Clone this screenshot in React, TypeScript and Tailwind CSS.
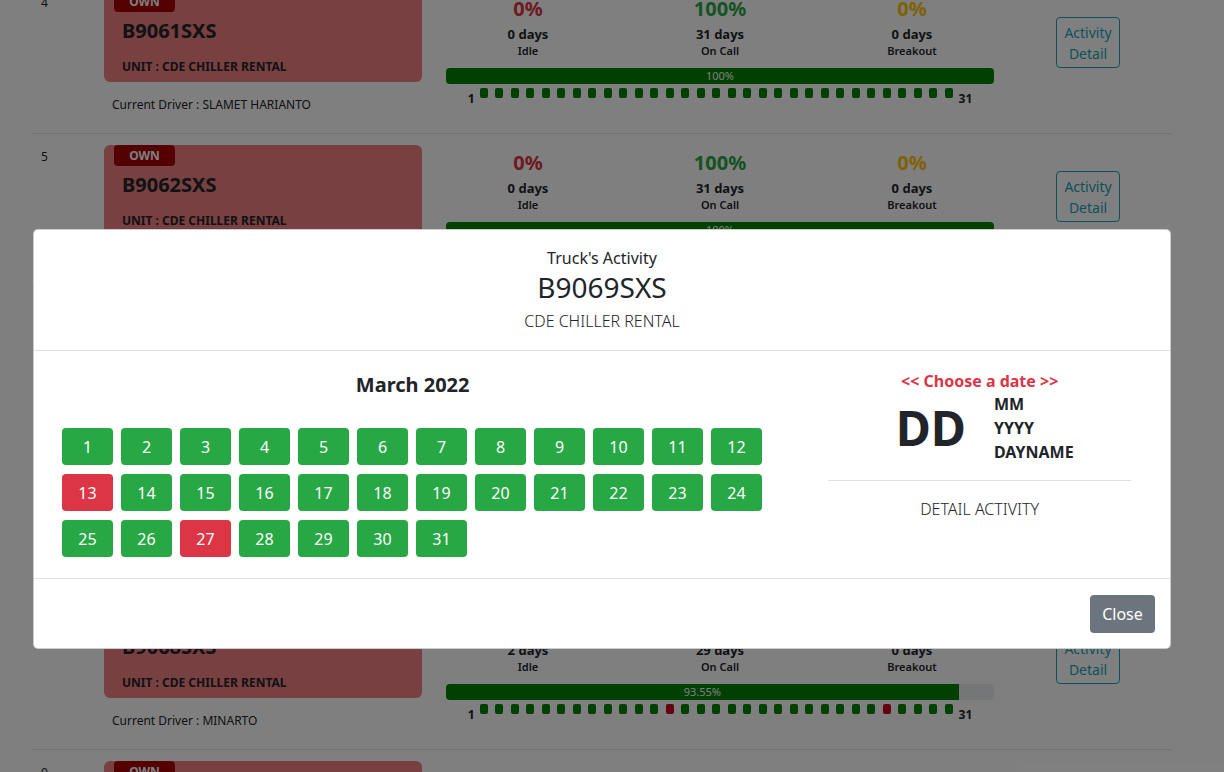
import React from 'react';

type Truck = {
  no: number;
  plate: string;
  driver: string;
  redDays: number[];
};

const trucks: Truck[] = [
  { no: 4, plate: 'B9061SXS', driver: 'SLAMET HARIANTO', redDays: [] },
  { no: 5, plate: 'B9062SXS', driver: 'SLAMET HARIANTO', redDays: [] },
  { no: 6, plate: 'B9063SXS', driver: 'SUPRIYADI', redDays: [] },
  { no: 7, plate: 'B9065SXS', driver: 'AHMAD FAUZI', redDays: [] },
  { no: 8, plate: 'B9068SXS', driver: 'MINARTO', redDays: [13, 27] },
  { no: 9, plate: 'B9069SXS', driver: 'RUDI HARTONO', redDays: [13, 27] },
];

const DAYS = Array.from({ length: 31 }, (_, i) => i + 1);

const fmt = (v: number) => (Number.isInteger(v) ? `${v}%` : `${v.toFixed(2)}%`);

const TruckRow: React.FC<{ t: Truck }> = ({ t }) => {
  const idleDays = t.redDays.length;
  const onCall = 31 - idleDays;
  const idlePct = (idleDays / 31) * 100;
  const onPct = (onCall / 31) * 100;

  const stats = [
    { pct: fmt(idlePct), days: idleDays, label: 'Idle', color: 'text-[#dc3545]' },
    { pct: fmt(onPct), days: onCall, label: 'On Call', color: 'text-[#28a745]' },
    { pct: '0%', days: 0, label: 'Breakout', color: 'text-[#ffc107]' },
  ];

  return (
    <div className="flex h-[154px] border-t border-[#dee2e6]">
      <div className="w-[72px] pl-[9px] pt-[15px] text-xs leading-4 text-[#212529]">{t.no}</div>

      <div className="w-[318px]">
        <div className="mt-[13px] h-[91px] rounded-md bg-[#f08080] px-[18px]">
          <div className="-ml-2 -mt-[2px] flex h-[21px] w-[61px] items-center justify-center rounded bg-[#aa0000] text-xs font-bold text-white">
            OWN
          </div>
          <div className="mt-[5px] text-xl font-bold leading-7 text-[#212529]">{t.plate}</div>
          <div className="mt-[14px] text-xs font-bold leading-4 text-[#212529]">UNIT : CDE CHILLER RENTAL</div>
        </div>
        <div className="ml-2 mt-[15px] text-xs leading-4 text-[#212529]">Current Driver : {t.driver}</div>
      </div>

      <div className="ml-[10px] w-[576px]">
        <div className="grid grid-cols-3 pt-[15px] text-center">
          {stats.map((s) => (
            <div key={s.label}>
              <div className={`text-xl font-bold leading-7 ${s.color}`}>{s.pct}</div>
              <div className="mt-[2px] text-[13px] font-bold leading-[18px] text-[#212529]">{s.days} days</div>
              <div className="mt-[1px] text-[11px] font-semibold leading-[14px] text-[#212529]">{s.label}</div>
            </div>
          ))}
        </div>
        <div className="mx-[14px] mt-[10px] flex h-4 overflow-hidden rounded bg-[#e9ecef]">
          <div
            className="flex items-center justify-center bg-[#008000] text-[11px] leading-4 text-white"
            style={{ width: `${onPct}%` }}
          >
            {fmt(onPct)}
          </div>
        </div>
        <div className="mt-[4px] flex items-start justify-center">
          <span className="mr-[5px] mt-[3px] text-xs font-bold leading-4 text-[#212529]">1</span>
          <div className="flex gap-[7.5px]">
            {DAYS.map((d) => (
              <div
                key={d}
                className={`h-[10px] w-2 rounded-[2px] ${t.redDays.includes(d) ? 'bg-[#c8001e]' : 'bg-[#008000]'}`}
              />
            ))}
          </div>
          <span className="ml-[6px] mt-[3px] text-xs font-bold leading-4 text-[#212529]">31</span>
        </div>
      </div>

      <div className="ml-[48px] mt-[37px] flex h-[51px] w-[64px] flex-col items-center justify-center rounded border border-[#17a2b8] text-sm leading-[21px] text-[#17a2b8]">
        <span>Activity</span>
        <span>Detail</span>
      </div>
    </div>
  );
};

export default function App() {
  const redDays = [13, 27];

  return (
    <div className="relative h-[772px] w-[1224px] overflow-hidden bg-white font-['Noto_Sans',sans-serif]">
      {/* page underneath */}
      <div className="-mt-[21px] ml-[32px] w-[1140px]">
        {trucks.map((t) => (
          <TruckRow key={t.no} t={t} />
        ))}
      </div>

      {/* backdrop */}
      <div className="absolute inset-0 bg-black/50" />

      {/* modal */}
      <div className="absolute left-[33px] top-[229px] w-[1138px] rounded-[5px] border border-black/20 bg-white text-[#212529]">
        <div className="flex h-[121px] flex-col items-center border-b border-[#dee2e6] pt-[17px]">
          <div className="text-base leading-[22px]">Truck's Activity</div>
          <div className="mt-[2px] text-[28px] leading-8">B9069SXS</div>
          <div className="mt-[8px] text-base font-light leading-5">CDE CHILLER RENTAL</div>
        </div>

        <div className="flex h-[227px] px-4">
          <div className="w-[726px]">
            <div className="mt-[20px] text-center text-xl font-bold leading-7">March 2022</div>
            <div className="ml-[12px] mt-[29px] grid w-max grid-cols-[repeat(12,51px)] gap-x-2 gap-y-[9px]">
              {DAYS.map((d) => (
                <div
                  key={d}
                  className={`flex h-[37px] items-center justify-center rounded text-base text-white ${
                    redDays.includes(d) ? 'bg-[#dc3545]' : 'bg-[#28a745]'
                  }`}
                >
                  {d}
                </div>
              ))}
            </div>
          </div>

          <div className="ml-[30px] w-[349px]">
            <div className="mt-[19px] text-center text-base font-bold leading-[22px] text-[#dc3545]">
              &lt;&lt; Choose a date &gt;&gt;
            </div>
            <div className="flex items-center justify-center gap-[28px] pl-[10px]">
              <div className="text-5xl font-bold leading-none">DD</div>
              <div className="text-base font-bold leading-6">
                <div>MM</div>
                <div>YYYY</div>
                <div>DAYNAME</div>
              </div>
            </div>
            <div className="mx-[23px] mt-[16px] border-t border-[#dee2e6]" />
            <div className="mt-[18px] text-center text-base font-light leading-5">DETAIL ACTIVITY</div>
          </div>
        </div>

        <div className="flex h-[70px] items-start justify-end border-t border-[#dee2e6] pr-[15px] pt-[16px]">
          <button className="h-[38px] w-[65px] rounded bg-[#6c757d] text-base text-white">Close</button>
        </div>
      </div>
    </div>
  );
}
